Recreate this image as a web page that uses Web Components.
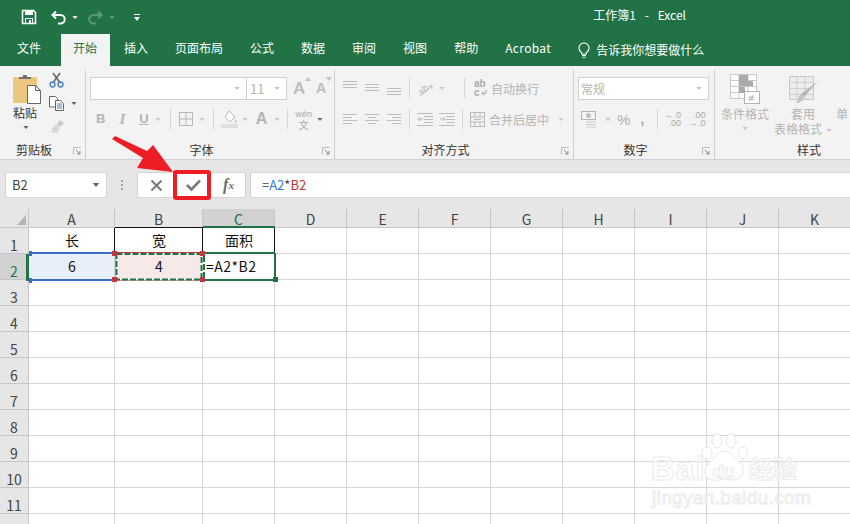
<!DOCTYPE html>
<html lang="zh">
<head>
<meta charset="utf-8">
<title>Excel</title>
<style>
html,body{margin:0;padding:0;background:#fff;}
body{width:850px;height:524px;overflow:hidden;font-family:"Noto Sans CJK SC","Noto Sans",sans-serif;}
</style>
</head>
<body>
<excel-app></excel-app>
<script>
const FONT = `"Noto Sans CJK SC","Noto Sans",sans-serif`;
const caret = (c, w = 7, h = 4) => `<svg width="${w}" height="${h}" viewBox="0 0 7 4"><path d="M0 0h7L3.5 4z" fill="${c}"/></svg>`;
const svg = (w, h, body) => `<svg width="${w}" height="${h}" viewBox="0 0 ${w} ${h}" fill="none">${body}</svg>`;
const lines = (arr, c = '#bcbcbc') => arr.map(l => `<rect x="${l[0]}" y="${l[1]}" width="${l[2]}" height="1" fill="${c}"/>`).join('');

function define(name, css, html, after) {
  const t = document.createElement('template');
  t.innerHTML = `<style>${css}</style>${html}`;
  customElements.define(name, class extends HTMLElement {
    constructor() {
      super();
      this.attachShadow({ mode: 'open' });
      this.shadowRoot.appendChild(t.content.cloneNode(true));
      if (after) after(this.shadowRoot, this);
    }
  });
}

// title bar
define('title-bar', `
:host{display:flex;align-items:center;height:34px;background:#217346;color:#fff;font:12px ${FONT};}
svg{display:block;flex:none}
.save{margin-left:21px}.undo{margin-left:14px}.c1{margin-left:5px}.redo{margin-left:9px}.c2{margin-left:6px}.cust{margin-left:19px}
.title{margin-left:auto;margin-right:164px;white-space:pre;word-spacing:1.75px;position:relative;top:-3px;}
`, `
${svg(16,16,`<path d="M1.5 1.5h11l2 2v11h-13z" stroke="#fff" stroke-width="1.6"/><rect x="4" y="1" width="8" height="5" fill="#fff"/><rect x="4.5" y="9.5" width="7" height="5" stroke="#fff"/><rect x="8" y="11" width="2" height="3" fill="#fff"/>`).replace('<svg','<svg class="save"')}
${svg(16,15,`<path d="M5 1.5L1.5 5 5 8.5M2 5h7.5a4 4 0 0 1 0 8.5H7" stroke="#fff" stroke-width="2"/>`).replace('<svg','<svg class="undo"')}
${caret('#fff',6,3).replace('<svg','<svg class="c1"')}
${svg(16,15,`<path d="M11 1.5L14.500 5 11 8.500M14 5H6.500a4 4 0 0 0 0 8.500H9" stroke="#5c9a7b" stroke-width="2"/>`).replace('<svg','<svg class="redo"')}
${caret('#5c9a7b',6,3).replace('<svg','<svg class="c2"')}
${svg(6,7,`<rect width="6" height="1" fill="#fff"/><path d="M0 3h6L3 7z" fill="#fff"/>`).replace('<svg','<svg class="cust"')}
<span class="title">工作簿1  -  Excel</span>
`);

// tab strip
define('tab-strip', `
:host{display:flex;align-items:stretch;height:32px;background:#217346;color:#fff;font:12px/28px ${FONT};padding-left:4.5px;}
span{display:block;padding:0 12.5px;margin-right:2px;white-space:nowrap;}
.first{margin-right:7px}
.on{background:#f3f3f3;color:#217346;}
.tell{display:flex;align-items:center;padding:0;margin-left:12.5px;line-height:16px;}
svg{margin-right:6px}
`, `
<span class="first">文件</span><span class="on">开始</span><span>插入</span><span>页面布局</span><span>公式</span><span>数据</span><span>审阅</span><span>视图</span><span>帮助</span><span style="letter-spacing:.35px">Acrobat</span>
<span class="tell">${svg(12,16,`<path d="M6 1a5 5 0 0 0-3 9c.6.500.8 1.200.8 2h4.400c0-.8.200-1.500.8-2a5 5 0 0 0-3-9z" stroke="#fff" stroke-width="1.100"/><path d="M4 13.500h4M4.500 15.300h3" stroke="#fff"/>`)}告诉我你想要做什么</span>
`);

// one ribbon group: slot for tools, then the caption row
define('ribbon-group', `
:host{display:flex;flex-direction:column;height:90px;box-sizing:border-box;border-right:1px solid #d0d0d0;margin-top:4px;flex:none;overflow:hidden;}
.tools{flex:1;min-height:0;}
.cap{display:flex;align-items:center;height:18px;margin-bottom:1px;font:12px/18px ${FONT};color:#333;}
.cap span{flex:1;text-align:center;white-space:nowrap;}
.launch{flex:none;width:8px;height:8px;margin:2px 4px 0 5px;}
:host([plain]) .cap span{flex:none;margin-left:var(--cap-left,0);}
:host([plain]) .launch{display:none;}
`, `
<div class="tools"><slot></slot></div>
<div class="cap"><span></span>${svg(8,8,`<path d="M.5 7.500v-7h7" stroke="#bbb"/><path d="M3 3l4 4M7 4v3H4" stroke="#888"/>`).replace('<svg','<svg class="launch"')}</div>
`, (root, el) => { root.querySelector('.cap span').textContent = el.getAttribute('label'); });

// clipboard
define('clipboard-tools', `
:host{display:flex;padding:4px 0 0 13px;font:12px/14px ${FONT};color:#333;}
svg{display:block}
.paste{width:28px;display:flex;flex-direction:column;}
.paste b{font-weight:400;white-space:nowrap;height:16px;line-height:17px}
.paste svg:last-child{margin:6px 0 0 10px;}
.small{margin:-2px 0 0 8px;display:flex;flex-direction:column;}
.row{display:flex;align-items:center;}
.row svg:nth-child(2){margin-left:6px}
`, `
<div class="paste">
${svg(28,30,`<rect x="0" y="3" width="24" height="26" rx="1" fill="#edc77f"/><path d="M6 5V3h4V1h4v2h4v2z" fill="#707070"/><path d="M14.500 11.500h8l5 5v13h-13z" fill="#fff" stroke="#666"/><path d="M22.500 11.500v5h5" stroke="#666"/>`)}
<b>粘贴</b>
${caret('#666',6,3)}
</div>
<div class="small">
${svg(15,16,`<path d="M4 1l6.500 9M11 1L4.500 10" stroke="#666" stroke-width="1.500"/><circle cx="3.500" cy="12.500" r="2.500" stroke="#3f7cbf" stroke-width="1.300"/><circle cx="11.500" cy="12.500" r="2.500" stroke="#3f7cbf" stroke-width="1.300"/>`)}
<div class="row" style="margin-top:8px">${svg(16,15,`<path d="M.5.500h6l2 2V11H.5z" fill="#fff" stroke="#666"/><path d="M6.500 4.500h5l3 3v7h-8z" fill="#fff" stroke="#666"/><path d="M8 8h5M8 10h5M8 12h5" stroke="#3f7cbf"/>`)}${caret('#666',6,3)}</div>
<div style="margin-top:8px">${svg(16,15,`<path d="M11 1l4 3-4 4-3-3z" fill="#c9c9c9"/><path d="M7 5l4 4-3 5-7-1 3-2-1-1z" fill="#d6d6d6"/>`)}</div>
</div>
`);

// font
define('font-tools', `
:host{display:block;padding:7px 0 0 4px;color:#b8b8b8;font:12px ${FONT};}
svg{display:block;flex:none}
.r1{display:flex;align-items:flex-start;height:23px;}
.box{box-sizing:border-box;height:23px;background:#fff;border:1px solid #cfcfcf;display:flex;align-items:center;justify-content:flex-end;padding-right:6px;}
.name{width:157px;padding-right:6px;}
.size{width:40px;margin-left:0;border-left:none;justify-content:space-between;padding-left:3px;font-size:13px;color:#b5b5b5;}
.grow{font:700 17px/23px "Liberation Sans",sans-serif;color:#bdbdbd;position:relative;display:flex;}
.r2{display:flex;align-items:center;height:20px;margin-top:9px;}
.g{font:700 13px/20px "Liberation Sans",sans-serif;color:#b5b5b5;}
.sep{width:1px;height:20px;background:#d4d4d4;flex:none;}
.wen{margin-left:7px;width:17px;display:flex;flex-direction:column;align-items:center;color:#a8a8a8;}
.wen span{display:block;}
`, `
<div class="r1">
<div class="box name">${caret('#c4c4c4',6,3)}</div>
<div class="box size">11${caret('#c4c4c4',6,3)}</div>
<div class="grow" style="margin-left:6px;width:23px">A${svg(6,4,`<path d="M0 4l3-4 3 4z" fill="#c4c4c4"/>`)}</div>
<div class="grow" style="font-size:14px;margin-left:0;">A${svg(6,4,`<path d="M0 0l3 4 3-4z" fill="#c4c4c4"/>`)}</div>
</div>
<div class="r2">
<span class="g" style="margin-left:6px">B</span>
<span class="g" style="margin-left:14px;font-style:italic;font-family:'Liberation Serif',serif;font-size:15px">I</span>
<span class="g" style="margin-left:14px;text-decoration:underline;">U</span>
${caret('#c8c8c8',6,3).replace('<svg','<svg style="margin-left:6px"')}
<i class="sep" style="margin-left:9px"></i>
${svg(14,14,`<rect x=".5" y=".5" width="13" height="13" stroke="#b8b8b8"/><path d="M7 0v14M0 7h14" stroke="#b8b8b8"/>`).replace('<svg','<svg style="margin-left:8px"')}
${caret('#c8c8c8',6,3).replace('<svg','<svg style="margin-left:6px"')}
<i class="sep" style="margin-left:8px"></i>
${svg(17,18,`<path d="M8 1l6 6-5 5-5-5z" stroke="#b8b8b8" fill="#fff"/><path d="M14 9c1 1.500 2 2.500 1.500 3.500s-2.500.5-1.500-3.500z" fill="#c4c4c4"/><rect y="14" width="17" height="4" fill="#dedede"/>`).replace('<svg','<svg style="margin-left:7px"')}
${caret('#c8c8c8',6,3).replace('<svg','<svg style="margin-left:4px"')}
<span class="g" style="margin-left:8px;font-size:16px">A</span>
${caret('#c8c8c8',6,3).replace('<svg','<svg style="margin-left:7px"')}
<i class="sep" style="margin-left:7px"></i>
<span class="wen"><span style="font:9px/10px 'Liberation Sans',sans-serif">wén</span><span style="font-size:10px;line-height:11px">文</span></span>
${caret('#666',6,3).replace('<svg','<svg style="margin-left:5px"')}
</div>
`);

// alignment
define('align-tools', `
:host{display:flex;flex-direction:column;padding:7px 0 0 8px;color:#b4b4b4;font:12px ${FONT};}
svg{display:block;flex:none}
.r{display:flex;align-items:center;height:22px;}
.sep{width:1px;height:20px;background:#d4d4d4;flex:none;}
.t{white-space:nowrap}
.wrap{margin-left:9px;width:17px;font:700 10px/9px "Liberation Sans",sans-serif;color:#aaa;}
.wrap svg{display:inline-block;margin-left:1px;}
`, `
<div class="r">
${svg(14,16,lines([[0,1,14],[0,4,14],[0,7,14]]))}
${svg(14,16,lines([[0,4,14],[0,7,14],[0,10,14]])).replace('<svg','<svg style="margin-left:8px"')}
${svg(14,16,lines([[0,8,14],[0,11,14],[0,14,14]])).replace('<svg','<svg style="margin-left:8px"')}
<i class="sep" style="margin-left:8px"></i>
${svg(17,17,`<text x="1" y="12" font-size="9" fill="#b4b4b4" transform="rotate(-40 7 9)" font-family="Liberation Sans">ab</text><path d="M3 16L15 6M15 6h-3M15 6v3" stroke="#b8b8b8"/>`).replace('<svg','<svg style="margin-left:7px"')}
${caret('#c8c8c8',6,3).replace('<svg','<svg style="margin-left:5px"')}
<i class="sep" style="margin-left:19px"></i>
<span class="wrap">ab<br>c${svg(6,6,`<path d="M5 0v3.500H1M3 1.500L1 3.500l2 2" stroke="#aaa"/>`)}</span>
<span class="t">自动换行</span>
</div>
<div class="r" style="margin-top:9px">
${svg(14,14,lines([[0,2,14],[0,5,9],[0,8,14],[0,11,9]]))}
${svg(14,14,lines([[0,2,14],[3,5,8],[0,8,14],[3,11,8]])).replace('<svg','<svg style="margin-left:8px"')}
${svg(14,14,lines([[0,2,14],[5,5,9],[0,8,14],[5,11,9]])).replace('<svg','<svg style="margin-left:8px"')}
<i class="sep" style="margin-left:8px"></i>
${svg(16,14,lines([[0,1,16],[7,4,9],[7,7,9],[7,10,9],[0,13,16]])+`<path d="M6 7H1M3 5L1 7l2 2" stroke="#b8b8b8"/>`).replace('<svg','<svg style="margin-left:7px"')}
${svg(16,14,lines([[0,1,16],[7,4,9],[7,7,9],[7,10,9],[0,13,16]])+`<path d="M1 7h5M4 5l2 2-2 2" stroke="#b8b8b8"/>`).replace('<svg','<svg style="margin-left:6px"')}
<i class="sep" style="margin-left:7px"></i>
${svg(15,15,`<rect x=".5" y=".5" width="14" height="14" stroke="#b8b8b8"/><path d="M0 5h15M0 10h15M5 0v5M10 0v5M5 10v5M10 10v5M4 7.500h7" stroke="#b8b8b8"/>`).replace('<svg','<svg style="margin-left:7px"')}
<span class="t" style="margin-left:4px">合并后居中</span>
${caret('#c8c8c8',6,3).replace('<svg','<svg style="margin-left:9px"')}
</div>
`);

// number
define('number-tools', `
:host{display:flex;flex-direction:column;padding:7px 0 0 4px;color:#b4b4b4;font:12px ${FONT};}
svg{display:block;flex:none}
.box{box-sizing:border-box;width:131px;height:23px;background:#fff;border:1px solid #cfcfcf;display:flex;align-items:center;justify-content:space-between;padding:0 6px 0 2px;}
.r{display:flex;align-items:center;height:20px;margin-top:9px;}
.sep{width:1px;height:20px;background:#d4d4d4;flex:none;}
.dec{font:9px/8px "Liberation Sans",sans-serif;color:#aaa;text-align:right;white-space:pre;}
`, `
<div class="box">常规${caret('#c4c4c4',6,3)}</div>
<div class="r">
${svg(16,17,`<rect x=".5" y=".5" width="14" height="8" stroke="#b4b4b4"/><circle cx="7.500" cy="4.500" r="2.500" fill="#c0c0c0"/><path d="M5 11h10M5 13.500h10M5 16h10" stroke="#ccc"/>`).replace('<svg','<svg style="margin-left:3px"')}
${caret('#c8c8c8',6,3).replace('<svg','<svg style="margin-left:8px"')}
<span style="margin-left:6px;font:15px 'Liberation Sans',sans-serif;color:#b0b0b0">%</span>
<span style="margin-left:10px;font:700 15px/12px 'Liberation Sans',sans-serif;color:#aaa">,</span>
<i class="sep" style="margin-left:12px"></i>
<span class="dec" style="margin-left:7px">←.0
.00</span>
<span class="dec" style="margin-left:8px">.00
→.0</span>
</div>
`);

// styles
define('style-tools', `
:host{display:flex;padding:4px 0 0 6px;color:#b4b4b4;font:12px/15px ${FONT};white-space:nowrap;}
svg{display:block;flex:none}
.c{display:flex;flex-direction:column;align-items:center;width:48px;}
.ico{height:31px;margin-bottom:1px;}
`, `
<div class="c">
${svg(30,31,`<rect x=".5" y=".5" width="26" height="24" fill="#fff" stroke="#c8c8c8"/><path d="M0 6.500h27M0 12.500h27M0 18.500h27M9 0v25M18 0v25" stroke="#c8c8c8"/><rect x="9" y="1" width="9" height="6" fill="#aaa"/><rect x="9" y="7" width="14" height="5" fill="#aaa"/><rect x="9" y="13" width="6" height="6" fill="#aaa"/><rect x="14.500" y="17.500" width="15" height="12" fill="#fff" stroke="#b0b0b0"/><text x="18" y="27.500" font-size="11" fill="#aaa" font-family="Liberation Sans">≠</text>`).replace('<svg','<svg class="ico"')}
<span>条件格式</span>
${caret('#c8c8c8',6,3).replace('<svg','<svg style="margin-top:6px;height:3px"')}
</div>
<div class="c" style="margin-left:5px;width:58px;">
${svg(30,31,`<rect x=".5" y="2.500" width="24" height="23" fill="#ececec" stroke="#c8c8c8"/><path d="M0 8.500h25M0 14.500h25M0 20.500h25M8 2v24M16 2v24" stroke="#cfcfcf"/><path d="M29 7L15 23l-3-3z" fill="#b5b5b5"/><path d="M12 20l3 3c-1 5-5 6-8 6 2-2 2-7 5-9z" fill="#c4c4c4"/>`).replace('<svg','<svg class="ico" style="margin-left:2px"')}
<span>套用</span>
<span>表格格式<span style="margin-left:4px;display:inline-block;vertical-align:middle">${caret('#c8c8c8',6,3)}</span></span>
</div>
<div class="c" style="margin-left:4px;width:14px;align-items:flex-start;">
<span style="margin-top:32px;">单</span>
</div>
`);

// ribbon
define('app-ribbon', `
:host{display:flex;height:94px;box-sizing:border-box;background:#f3f3f3;border-bottom:1px solid #d2d2d2;overflow:hidden;}
ribbon-group{--cap-left:82px}
`, `
<ribbon-group label="剪贴板" style="width:86px"><clipboard-tools></clipboard-tools></ribbon-group>
<ribbon-group label="字体" style="width:249px"><font-tools></font-tools></ribbon-group>
<ribbon-group label="对齐方式" style="width:239px"><align-tools></align-tools></ribbon-group>
<ribbon-group label="数字" style="width:141px"><number-tools></number-tools></ribbon-group>
<ribbon-group label="样式" plain style="width:135px;border:none"><style-tools></style-tools></ribbon-group>
`);

// formula bar
define('formula-bar', `
:host{display:flex;align-items:flex-start;height:49px;box-sizing:border-box;padding:12px 0 0 5px;background:#e6e6e6;font:12px/24px ${FONT};}
.box{box-sizing:border-box;height:26px;background:#fff;border:1px solid #d4d4d4;display:flex;align-items:center;}
.name{width:102px;padding:0 6px 0 6px;justify-content:space-between;color:#444;font-size:13px;}
.dots{width:2px;margin:8px 14px 0 14px;height:10px;background:repeating-linear-gradient(#a0a0a0 0 2px,transparent 2px 4px);}
.btns{width:109px;flex:none;}
.btns span{display:flex;justify-content:center;align-items:center;flex:none;}
.fx{font:italic 700 16px/20px "Liberation Serif",serif;color:#6b6b6b;}
.input{flex:1;margin-left:4px;padding-left:11px;border-right:none;font-size:13px;color:#444;}
.a{color:#3578d6}.b{color:#d0322f}
`, `
<div class="box name">B2${caret('#6a6a6a',8,4)}</div>
<div class="dots"></div>
<div class="box btns">
<span style="width:36px">${svg(11,11,`<path d="M.5.500l10 10M10.500.500l-10 10" stroke="#7a7a7a" stroke-width="2"/>`)}</span>
<span style="width:38px">${svg(15,12,`<path d="M1 6l4.500 4.500L14 1.500" stroke="#7a7a7a" stroke-width="2.600"/>`)}</span>
<span class="fx" style="width:33px">f<span style="font-size:11px;line-height:20px">x</span></span>
</div>
<div class="box input"><span>=<span class="a">A2</span>*<span class="b">B2</span></span></div>
`);

// sheet grid, cells generated from the column and row sizes
define('sheet-grid', `
:host{display:block;position:relative;height:315px;overflow:hidden;background:#fff;}
.grid{display:grid;grid-template-columns:29px 86px 88px 72px 72px 72px 72px 72px 72px 72px 72px 72px;grid-template-rows:19px repeat(12,26px);font:14px ${FONT};color:#111;}
.grid div{box-sizing:border-box;border-right:1px solid #d6d6d6;border-bottom:1px solid #d6d6d6;white-space:nowrap;overflow:hidden;}
.grid .ch{background:#e6e6e6;border-color:#c6c6c6;text-align:center;line-height:21px;color:#444;}
.grid .rh{background:#e6e6e6;border-color:#c6c6c6;text-align:center;line-height:34px;color:#444;}
.grid .sel{background:#d2d2d2;color:#217346;}
.grid .c{text-align:center;line-height:24px;padding-left:1px;}
.grid .l{padding-left:3px;line-height:24px;letter-spacing:.5px;}
svg{position:absolute;left:0;top:0;}
`, `<div class="grid"></div>
<svg width="850" height="315" viewBox="0 209 850 315">
<path d="M17 225h9v-10z" fill="#b5b5b5"/>
<path d="M203 227h72" stroke="#217346" stroke-width="2"/>
<path d="M27.500 254v27" stroke="#217346" stroke-width="3"/>
<path d="M114.500 228v24M202.500 228v24M274.500 228v24" stroke="#111"/>
<path d="M115 227.500h88" stroke="#111"/>
<path d="M30 253h83M30 280h83" stroke="#3a70c4" stroke-width="2"/>
<rect x="29" y="251" width="3" height="5" fill="#3a70c4"/><rect x="29" y="278" width="3" height="5" fill="#3a70c4"/>
<rect x="115.500" y="252.500" width="86" height="28" stroke="#c0393f" fill="none"/>
<rect x="116.500" y="254" width="85" height="25.500" stroke="#fff" stroke-width="2" fill="none"/>
<rect x="116.500" y="254" width="85" height="25.500" stroke="#217346" stroke-width="2" fill="none" stroke-dasharray="6 2"/>
<path d="M205 253h70M205 280h70M275 253v27" stroke="#217346" stroke-width="2" fill="none"/>
<path d="M204 256v24" stroke="#fff" stroke-width="2"/><path d="M204 256v24" stroke="#217346" stroke-width="2" stroke-dasharray="6 2"/>
<rect x="112" y="251" width="5" height="5" fill="#c0393f"/><rect x="112" y="277" width="5" height="5" fill="#c0393f"/>
<rect x="200" y="251" width="5" height="5" fill="#c0393f"/><rect x="200" y="277" width="5" height="5" fill="#c0393f"/>
<rect x="273" y="277" width="5" height="5" fill="#217346"/>
</svg>`, (root) => {
  const grid = root.querySelector('.grid');
  const add = (cls, text, bg) => {
    const d = document.createElement('div');
    d.className = cls;
    d.textContent = text || '';
    if (bg) d.style.background = bg;
    grid.appendChild(d);
  };
  const cols = 'ABCDEFGHIJK'.split('');
  const data = { A1: '长', B1: '宽', C1: '面积', A2: '6', B2: '4', C2: '=A2*B2' };
  add('ch');
  cols.forEach(c => add('ch' + (c === 'C' ? ' sel' : ''), c));
  for (let r = 1; r <= 12; r++) {
    add('rh' + (r === 2 ? ' sel' : ''), r < 12 ? r : '');
    cols.forEach(c => {
      const k = c + r;
      const bg = k === 'A2' ? '#e7eff9' : k === 'B2' ? '#f7e9e8' : '';
      add(k === 'C2' ? 'l' : 'c', data[k], bg);
    });
  }
});

// red arrow and box drawn on top of the screenshot
define('call-out', `
:host{position:absolute;left:0;top:0;display:block;width:850px;height:524px;pointer-events:none;}
svg{display:block}
`, `<svg width="850" height="524" viewBox="0 0 850 524" fill="none">
<path d="M112 139l3-3 32 15 6-6 20 27-36-4 6-10z" fill="#ee1c25"/>
<rect x="175" y="172" width="34" height="26" rx="1" stroke="#ee1c25" stroke-width="4"/>
</svg>`);

// baidu watermark
define('wm-mark', `
:host{position:absolute;left:650px;top:432px;display:block;width:156px;height:76px;pointer-events:none;}
span{position:absolute;color:rgba(255,255,255,.6);-webkit-text-stroke:1px #ebebeb;white-space:nowrap;font-family:"Liberation Sans",sans-serif;}
svg{position:absolute;left:51px;top:0;}
`, `
<span style="left:1px;top:19px;font-size:33px;font-weight:700;line-height:36px;letter-spacing:1px">Bai</span>
${svg(50,52,`<ellipse cx="16" cy="9" rx="5" ry="7" stroke="#e6e6e6" fill="#fff"/><ellipse cx="30" cy="9" rx="5" ry="7" stroke="#e6e6e6" fill="#fff"/><ellipse cx="6" cy="21" rx="5" ry="6" stroke="#e6e6e6" fill="#fff"/><ellipse cx="42" cy="21" rx="5" ry="6" stroke="#e6e6e6" fill="#fff"/><path d="M23 19c8 0 10 7 17 12 5 5 2 18-8 17-4 0-6-1-9-1s-6 2-11 1C3 47 1 37 8 31c6-4 7-12 15-12z" stroke="#e6e6e6" fill="#fff"/>`)}
<span style="left:62px;top:29px;font-size:19px;font-weight:700;line-height:22px;">du</span>
<span style="left:99px;top:22px;font-size:24px;font-weight:700;line-height:28px;font-family:'Noto Sans CJK SC',sans-serif;">经验</span>
<span style="left:2px;top:55px;font-size:19px;line-height:22px;letter-spacing:.35px">jingyan.baidu.com</span>
`);

define('excel-app', `
:host{display:block;position:relative;width:850px;height:524px;overflow:hidden;}
`, `
<title-bar></title-bar>
<tab-strip></tab-strip>
<app-ribbon></app-ribbon>
<formula-bar></formula-bar>
<sheet-grid></sheet-grid>
<wm-mark></wm-mark>
<call-out></call-out>
`);
</script>
</body>
</html>
